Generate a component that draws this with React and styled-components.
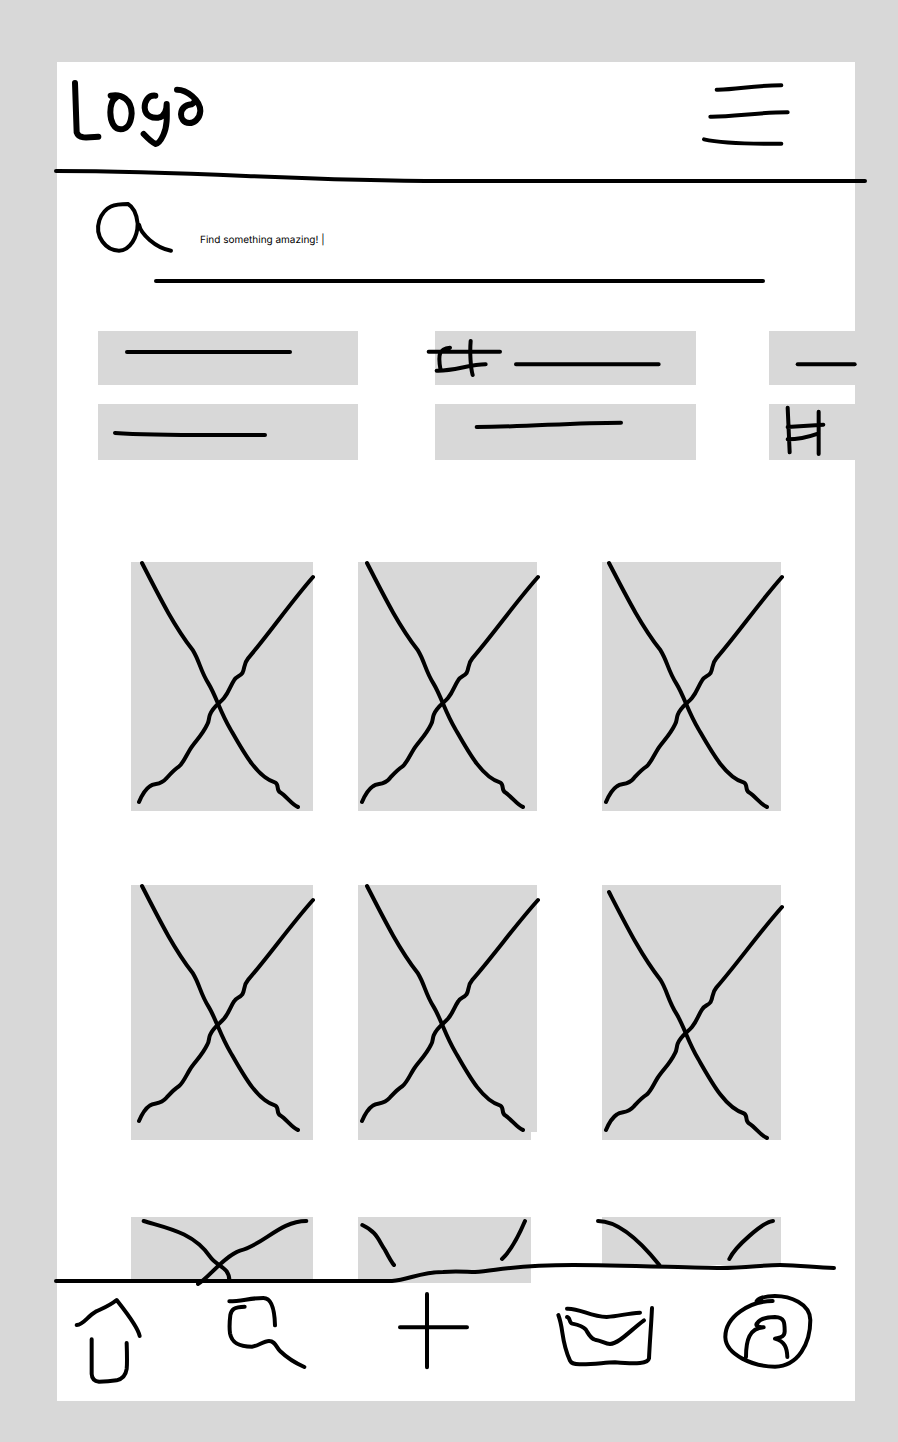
import React from "react";
import styled, { createGlobalStyle } from "styled-components";

const GREY = "#d8d8d8";

const GlobalStyle = createGlobalStyle`
  *, *::before, *::after { box-sizing: border-box; }
  body {
    margin: 0;
    background: ${GREY};
    font-family: Inter, "Liberation Sans", sans-serif;
    color: #000;
  }
  button { border: 0; padding: 0; background: none; cursor: pointer; }
`;

const Page = styled.div`
  min-height: 100vh;
  padding: 62px 43px 41px 57px;
`;

const Screen = styled.div`
  display: flex;
  flex-direction: column;
  background: #fff;
`;

const Sketch = styled.svg`
  display: block;
  flex: none;
  width: ${(p) => p.$w || "100%"};
  height: ${(p) => p.$h || "100%"};
  overflow: visible;
  fill: none;
  stroke: #000;
  stroke-width: ${(p) => p.$pen || 4}px;
  stroke-linecap: round;
  stroke-linejoin: round;

  svg { overflow: visible; }
  path { vector-effect: non-scaling-stroke; }
`;

const Header = styled.header`
  display: flex;
  justify-content: space-between;
  padding: 18px 65px 20px 15px;
`;

const LogoLink = styled.a`
  display: block;
`;

const MenuButton = styled.button`
  display: block;
`;

const SearchForm = styled.form`
  display: flex;
  flex-direction: column;
  padding: 18px 90px 48px 39px;
`;

const SearchLabel = styled.label`
  display: flex;
  align-items: flex-end;
  gap: 27px;
`;

const SearchInput = styled.input`
  flex: 1;
  min-width: 0;
  height: 16px;
  margin-bottom: 5px;
  padding: 0;
  border: 0;
  outline: 0;
  background: none;
  color: #000;
  font-family: inherit;
  font-size: 10px;
  line-height: 16px;
  text-rendering: geometricPrecision;
`;

const Underline = styled.div`
  height: 4px;
  margin: 26px 0 0 58px;
  border-radius: 2px;
  background: #000;
`;

const Tags = styled.section`
  display: grid;
  grid-template-columns: 260fr 77fr 261fr 73fr 86fr;
  grid-template-rows: 54px 19px 56px;
  padding-left: 41px;
`;

const Tag = styled.button`
  grid-column: ${(p) => p.$col};
  grid-row: ${(p) => p.$row};
  background: ${GREY};
`;

const Gallery = styled.main`
  display: grid;
  grid-template-columns: 182fr 45fr 179fr 65fr 179fr;
  grid-template-rows: 249px 74px 255px 77px 66px;
  padding: 102px 74px 0;
`;

const Tile = styled.a`
  grid-column: ${(p) => p.$col};
  grid-row: ${(p) => p.$row};
  background-image: linear-gradient(${GREY}, ${GREY}), linear-gradient(${GREY}, ${GREY});
  background-repeat: no-repeat;
  background-size: ${(p) => p.$fill || "100% 100%"};
`;

const Footer = styled.footer`
  display: flex;
  flex-direction: column;
  margin-top: -21px;
`;

const Nav = styled.nav`
  display: grid;
  grid-template-columns: 152fr 171fr 159fr 166fr 90fr;
  justify-items: start;
  padding: 9px 42px 17px 18px;
`;

const NavButton = styled.button`
  display: block;
`;

const tags = [
  { name: "Tag 1", col: 1, row: 1, box: "0 0 260 54", d: "M29 21H192" },
  {
    name: "Tag 2", col: 3, row: 1, box: "76 34 783 162",
    d: "M57 96H271M81 153C130 155 180 134 228 134M121 84C88 88 84 104 93 153M183 64C180 100 183 145 189 166M319 134H747",
  },
  { name: "Tag 3", col: 5, row: 1, box: "87 34 258 162", d: "M173 134H344" },
  { name: "Tag 4", col: 1, row: 3, box: "0 0 260 56", d: "M17 29C60 32 110 31 167 31" },
  { name: "Tag 5", col: 3, row: 3, box: "76 253 783 168", d: "M201 322C350 322 480 309 634 309" },
  {
    name: "Tag 6", col: 5, row: 3, box: "87 253 258 168",
    d: "M143 264L149 398M236 276V403M143 322L250 315M143 359C185 359 210 350 236 341",
  },
];

const FALLING =
  "M65 38C120 145 160 225 218 300C238 332 240 360 265 400C288 438 300 485 330 535C370 605 410 680 466 697C478 705 468 718 480 726C500 738 515 763 534 770";
const RISING =
  "M578 82C510 160 450 248 384 326C370 342 375 355 367 370C358 382 350 378 342 392C330 410 328 425 312 445C300 460 280 470 270 495C266 505 268 515 262 524C245 560 225 575 210 600C198 620 190 640 178 650C160 662 150 675 140 686C120 710 105 698 90 710C75 720 65 740 58 757";

// Each cross is two strokes; a stroke's box is [x, y, width, height] inside its tile.
const photos = [
  { col: 1, row: 1, size: [182, 249], falling: [11, 1, 156, 244], rising: [8, 15, 174, 225] },
  { col: 3, row: 1, size: [179, 249], falling: [9, 1, 156, 244], rising: [4, 15, 176, 225] },
  { col: 5, row: 1, size: [179, 249], falling: [7, 1, 158, 244], rising: [4, 15, 176, 225] },
  { col: 1, row: 3, size: [182, 255], falling: [11, 1, 156, 244], rising: [8, 15, 174, 221] },
  {
    col: 3, row: 3, size: [179, 255], falling: [9, 1, 156, 244], rising: [4, 15, 176, 221],
    fill: "100% calc(100% - 8px), calc(100% - 6px) 100%",
  },
  { col: 5, row: 3, size: [179, 255], falling: [7, 7, 158, 246], rising: [4, 22, 176, 223] },
];

const partialPhotos = [
  {
    col: 1, box: "243 51 546 198",
    d: "M281 63C350 84 430 97 480 170C500 200 539 200 538 243M444 252C475 235 520 170 570 152C640 135 690 63 769 63",
  },
  {
    col: 3, box: "54 51 537 198", fill: "calc(100% - 6px) 100%",
    d: "M67 75C110 95 115 120 135 150Q155 188 162 195M555 63C535 110 515 150 486 177",
  },
  {
    col: 5, box: "186 51 537 198", fill: "100% 48px",
    d: "M174 63C240 63 310 135 358 195M699 63C670 65 585 140 568 177",
  },
];

const navItems = [
  {
    name: "Home", w: "67px", box: "75 279 201 273",
    d: "M80 375C102 373 112 349 137 335C160 324 178 318 200 300C225 332 264 380 269 408M125 418V522Q126 543 147 545Q175 545 200 541Q226 535 230 507Q232 490 230 429",
  },
  {
    name: "Search", w: "79px", box: "531 279 237 273",
    d: "M538 304C575 304 600 294 640 294C668 294 674 335 675 376M584 320C552 320 544 330 541 345C538 370 538 385 540 400C546 432 572 440 606 440C625 438 640 423 657 423C675 423 678 440 690 453Q720 482 763 501",
  },
  { name: "Add", w: "71px", box: "174 279 213 273", d: "M180 382H381M261 282V502" },
  {
    name: "Messages", w: "97px", box: "51 279 291 273",
    d: "M55 345C72 390 62 420 90 482Q95 493 118 493C160 494 190 488 225 487C260 490 280 491 300 489Q325 486 327 475C329 430 334 370 336 324M81 326C120 324 150 350 200 351C240 348 260 340 300 338M81 351C92 353 86 368 97 371C115 375 128 378 137 388C145 400 150 415 165 419C185 422 195 431 210 432C238 430 270 392 312 361",
  },
  {
    name: "Profile", w: "90px", box: "549 279 270 273",
    d: "M698 303C630 303 555 350 556 412C558 465 640 500 705 500C775 498 811 430 811 360C810 310 750 288 705 288C680 288 660 292 650 303M618 471C618 420 628 385 671 382C650 380 645 376 652 369C662 355 680 351 705 351C735 352 734 370 734 395C733 412 720 412 705 416C735 424 741 445 742 471",
  },
];

function CrossStroke({ box: [x, y, width, height], viewBox, d }) {
  return (
    <svg x={x} y={y} width={width} height={height} viewBox={viewBox} preserveAspectRatio="none">
      <path d={d} />
    </svg>
  );
}

export default function App() {
  return (
    <>
      <GlobalStyle />
      <Page>
        <Screen>
          <Header>
            <LogoLink href="#" aria-label="Logo">
              <Sketch $w="132px" $h="68px" $pen={6} viewBox="66 75 396 204">
                <path d="M75 84L80 232Q84 245 100 247C118 248 130 246 145 245" />
                <path d="M182 122C215 115 245 135 245 175C243 210 228 223 212 223C192 222 181 200 181 172C181 150 186 135 198 128" />
                <path d="M316 122C295 120 284 138 284 158C286 185 310 190 325 188C345 184 350 165 350 147C351 185 352 215 340 240Q328 266 317 267Q305 262 281 237" />
                <path d="M381 104C410 104 451 135 451 168C449 195 430 204 418 204C400 203 393 190 393 178C394 158 408 150 425 148Q431 145 434 140" />
              </Sketch>
            </LogoLink>
            <MenuButton type="button" aria-label="Menu">
              <Sketch $w="88px" $h="68px" viewBox="66 60 264 204">
                <path d="M110 89C170 90 215 76 304 76M91 170C160 171 230 157 323 157M72 238C120 249 200 252 304 251" />
              </Sketch>
            </MenuButton>
          </Header>
          <Sketch $h="16px" viewBox="0 0 798 16" preserveAspectRatio="none" aria-hidden="true">
            <path d="M-1 3C150 3 230 13 388 13H808" />
          </Sketch>

          <SearchForm role="search">
            <SearchLabel>
              <Sketch $w="77px" $h="51px" viewBox="48 35 231 153" role="img" aria-label="Search">
                <path d="M144 41C105 41 75 45 58 90C42 140 80 181 117 181C150 180 173 140 173 100C170 70 160 50 144 41M177 103C182 130 225 172 273 181" />
              </Sketch>
              <SearchInput type="text" defaultValue="Find something amazing! |" />
            </SearchLabel>
            <Underline />
          </SearchForm>

          <Tags>
            {tags.map((t) => (
              <Tag key={t.name} type="button" aria-label={t.name} $col={t.col} $row={t.row}>
                <Sketch viewBox={t.box} preserveAspectRatio="none">
                  <path d={t.d} />
                </Sketch>
              </Tag>
            ))}
          </Tags>

          <Gallery>
            {photos.map((p, i) => (
              <Tile key={i} href="#" aria-label={`Photo ${i + 1}`} $col={p.col} $row={p.row} $fill={p.fill}>
                <Sketch viewBox={`0 0 ${p.size.join(" ")}`} preserveAspectRatio="none">
                  <CrossStroke box={p.falling} viewBox="65 38 469 732" d={FALLING} />
                  <CrossStroke box={p.rising} viewBox="58 82 520 675" d={RISING} />
                </Sketch>
              </Tile>
            ))}
            {partialPhotos.map((p, i) => (
              <Tile key={p.box} href="#" aria-label={`Photo ${i + 7}`} $col={p.col} $row={5} $fill={p.fill}>
                <Sketch viewBox={p.box} preserveAspectRatio="none">
                  <path d={p.d} />
                </Sketch>
              </Tile>
            ))}
          </Gallery>

          <Footer>
            <Sketch $h="22px" viewBox="0 0 798 22" preserveAspectRatio="none" aria-hidden="true">
              <path d="M-1 19H335C352 18 362 10 386 10C400 9 410 10 418 10C440 9 452 3 516 3C560 3 640 6 663 6C690 6 705 3 723 3C745 3 758 6 777 6" />
            </Sketch>
            <Nav>
              {navItems.map((n) => (
                <NavButton key={n.name} type="button" aria-label={n.name}>
                  <Sketch $w={n.w} $h="91px" viewBox={n.box}>
                    <path d={n.d} />
                  </Sketch>
                </NavButton>
              ))}
            </Nav>
          </Footer>
        </Screen>
      </Page>
    </>
  );
}
